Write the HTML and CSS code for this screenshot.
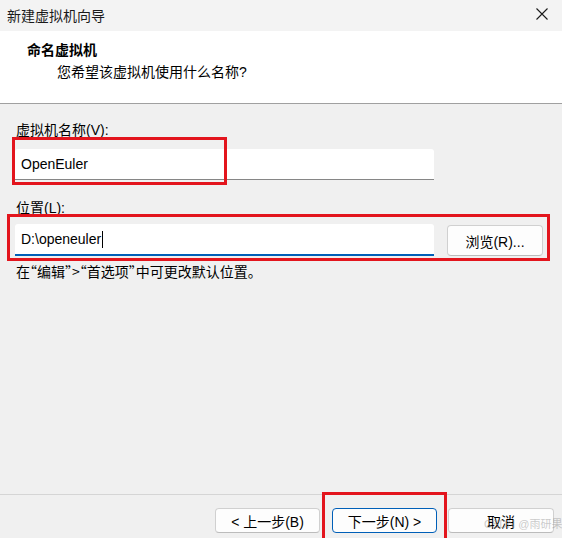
FILE: index.html
```html
<!DOCTYPE html>
<html lang="zh">
<head>
<meta charset="utf-8">
<title>新建虚拟机向导</title>
<link rel="stylesheet" href="styles.css">
</head>
<body>
<div class="window">
  <div class="titlebar">
    <span class="title">新建虚拟机向导</span>
    <svg class="close" width="12" height="12" viewBox="0 0 12 12"><path d="M0.5 0.5 L11.5 11.5 M11.5 0.5 L0.5 11.5" stroke="#1a1a1a" stroke-width="1.1" fill="none"/></svg>
  </div>
  <div class="header">
    <div class="heading">命名虚拟机</div>
    <div class="subtitle">您希望该虚拟机使用什么名称?</div>
  </div>
  <div class="content">
    <div class="label">虚拟机名称(V):</div>
    <div class="field name-field"><span class="value">OpenEuler</span></div>
    <div class="label label-loc">位置(L):</div>
    <div class="loc-row">
      <div class="field loc-field"><span class="value">D:\openeuler</span><span class="caret"></span></div>
      <button class="btn browse">浏览(R)...</button>
    </div>
    <div class="hint">在<span class="q">“</span>编辑<span class="q">”</span>&gt;<span class="q">“</span>首选项<span class="q">”</span>中可更改默认位置。</div>
  </div>
  <div class="footer">
    <button class="btn nav">&lt; 上一步(B)</button>
    <button class="btn nav primary">下一步(N) &gt;</button>
    <button class="btn nav cancel">取消</button>
  </div>
  <div class="mark mark1"></div>
  <div class="mark mark2"></div>
  <div class="mark mark3"></div>
  <div class="watermark">CSDN @雨研果</div>
</div>
</body>
</html>
```

FILE: styles.css
```css
* { box-sizing: border-box; }
html, body { margin: 0; padding: 0; }
body {
  font-family: "Liberation Sans", "Noto Sans CJK SC", sans-serif;
  font-size: 14px;
  color: #000;
  background: #f0f0f0;
}
.window {
  position: relative;
  width: 562px;
  height: 538px;
  display: flex;
  flex-direction: column;
  background: #f0f0f0;
  overflow: hidden;
}
.titlebar {
  height: 31px;
  flex: none;
  display: flex;
  align-items: center;
  justify-content: space-between;
  padding: 0 14px 0 7px;
  background: #f3f3f3;
}
.title { font-size: 14px; color: #1a1a1a; line-height: 20px; }
.close { display: block; margin-top: -4px; }
.header {
  flex: none;
  height: 73px;
  background: #fff;
  padding-top: 9px;
  border-bottom: 1px solid #a0a0a0;
}
.heading {
  padding-left: 27px;
  font-weight: bold;
  font-size: 14px;
  line-height: 20px;
}
.subtitle {
  padding-left: 57px;
  margin-top: 2px;
  line-height: 20px;
}
.content {
  flex: 1;
  padding: 16px 19px 0 15px;
}
.label { line-height: 20px; padding-left: 1px; }
.label-loc { margin-top: 18px; }
.field {
  height: 31px;
  background: #fff;
  display: flex;
  align-items: center;
  padding-left: 6px;
  border-bottom: 1px solid #868686;
  border-radius: 3px 3px 0 0;
}
.name-field { width: 419px; margin-top: 9px; }
.loc-row {
  display: flex;
  gap: 13px;
  margin-top: 6px;
  align-items: flex-start;
}
.loc-field {
  width: 419px;
  height: 32px;
  border-bottom: 2px solid #005fb8;
}
.caret {
  display: inline-block;
  width: 1px;
  height: 17px;
  background: #000;
  margin-left: 1px;
}
.btn {
  font-family: "Liberation Sans", "Noto Sans CJK SC", sans-serif;
  font-size: 14px;
  color: #000;
  background: #fdfdfd;
  border: 1px solid #d0d0d0;
  border-bottom-color: #bcbcbc;
  border-radius: 4px;
  padding: 0;
  margin: 0;
}
.browse { width: 96px; height: 31px; margin-top: 1px; }
.hint {
  margin-top: 5px;
  line-height: 20px;
  padding-left: 1px;
  font-family: "Noto Sans CJK SC", sans-serif;
}
.q { font-feature-settings: "halt" 1; }
.footer {
  flex: none;
  height: 44px;
  border-top: 1px solid #d5d5d5;
  display: flex;
  justify-content: flex-end;
  padding: 13px 8px 0 0;
  gap: 11px;
}
.nav { width: 105px; height: 25px; }
.primary { border: 1px solid #005fb8; margin-left: 1px; }
.cancel { width: 106px; }
.mark {
  position: absolute;
  border: 3px solid #e3151d;
  pointer-events: none;
}
.mark1 { left: 12px; top: 137px; width: 215px; height: 48px; }
.mark2 { left: 7px; top: 214px; width: 543px; height: 47px; }
.mark3 { left: 322px; top: 492px; width: 125px; height: 50px; }
.watermark {
  position: absolute;
  left: 484px;
  top: 517px;
  font-size: 11px;
  line-height: 14px;
  white-space: nowrap;
  color: rgba(150, 150, 150, 0.5);
}
```
